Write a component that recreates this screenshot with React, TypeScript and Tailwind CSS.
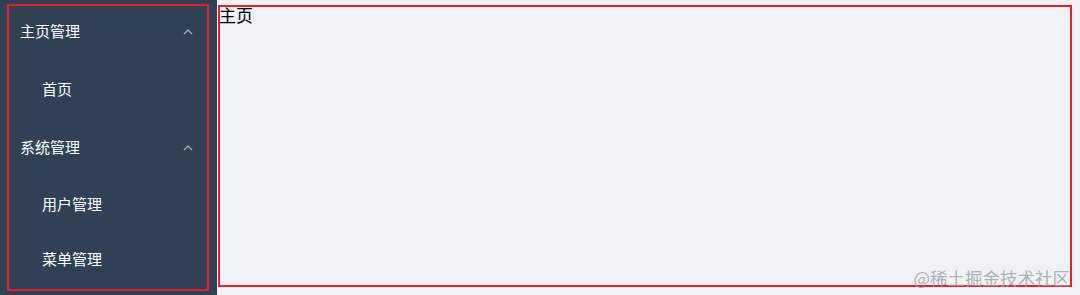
import React from "react";

function ChevronUp() {
  return (
    <svg width="10" height="7" viewBox="0 0 10 7" className="block">
      <polyline points="1,6 5,2 9,6" fill="none" stroke="#a3acb9" strokeWidth="1.4" />
    </svg>
  );
}

export default function App() {
  const font = { fontFamily: '"Noto Sans CJK SC", "Noto Sans", sans-serif' };
  return (
    <div className="relative flex h-[295px] w-[1080px] overflow-hidden bg-[#f0f2f5]" style={font}>
      <aside className="h-full w-[217px] shrink-0 bg-[#304156] pl-[7px] pt-[4px]">
        <nav className="flex h-[287px] w-[202px] flex-col border-2 border-[#e5202a] text-[15px] text-white">
          <div className="flex h-[50px] items-center justify-between pl-[11px] pr-[14px]">
            <span>主页管理</span>
            <ChevronUp />
          </div>
          <div className="flex h-[67px] items-center pl-[33px]">
            <span>首页</span>
          </div>
          <div className="flex h-[49px] items-center justify-between pl-[11px] pr-[14px]">
            <span>系统管理</span>
            <ChevronUp />
          </div>
          <div className="flex h-[65px] items-center pl-[33px]">
            <span>用户管理</span>
          </div>
          <div className="flex h-[45px] items-center pl-[33px]">
            <span>菜单管理</span>
          </div>
        </nav>
      </aside>
      <main className="flex-1 pb-[8px] pl-[1px] pr-[8px] pt-[5px]">
        <div className="h-full w-full border-2 border-[#e5202a]">
          <div className="-ml-[1px] -mt-[2px] text-[17px] leading-[20px] text-black">主页</div>
        </div>
      </main>
      <div className="pointer-events-none absolute bottom-[7px] right-[10px] text-[17.5px] leading-[20px] text-[#9aa0a8]/80">
        @稀土掘金技术社区
      </div>
    </div>
  );
}
